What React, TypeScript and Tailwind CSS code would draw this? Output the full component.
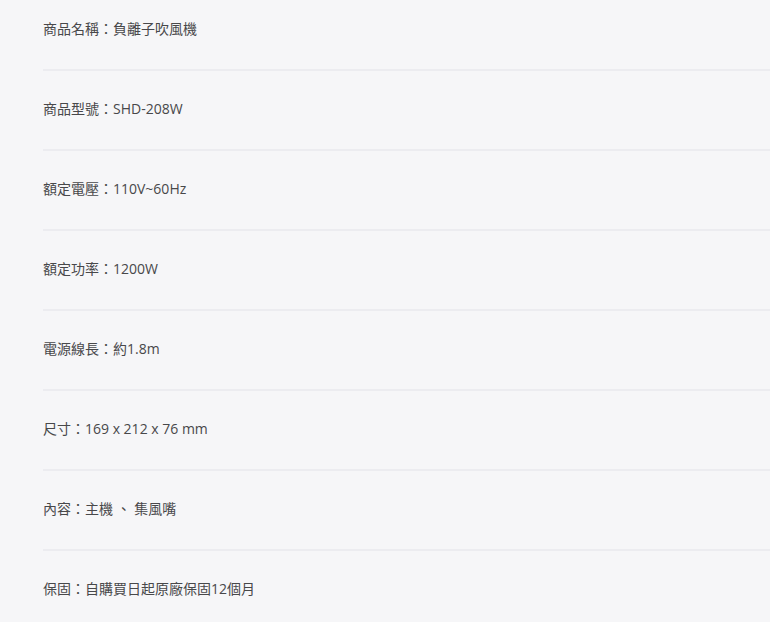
const specs = [
  '商品名稱：負離子吹風機',
  '商品型號：SHD-208W',
  '額定電壓：110V~60Hz',
  '額定功率：1200W',
  '電源線長：約1.8m',
  '尺寸：169 x 212 x 76 mm',
  '內容：主機 、 集風嘴',
  '保固：自購買日起原廠保固12個月',
]

export default function App() {
  return (
    <div
      className="min-h-[622px] w-[770px] overflow-hidden bg-[#f6f6f8] pl-[43px]"
      style={{ fontFamily: '"Open Sans", "Noto Sans CJK TC", sans-serif' }}
    >
      <ul>
        {specs.map((text, i) => (
          <li
            key={i}
            className={`${i === 0 ? 'pt-[19px]' : 'pt-[28px]'} pb-[30px] ${
              i < specs.length - 1 ? 'border-b-2 border-[#ececf0]' : ''
            }`}
          >
            <p className="text-[14px] leading-[20px] text-[#48484a]">{text}</p>
          </li>
        ))}
      </ul>
    </div>
  )
}
